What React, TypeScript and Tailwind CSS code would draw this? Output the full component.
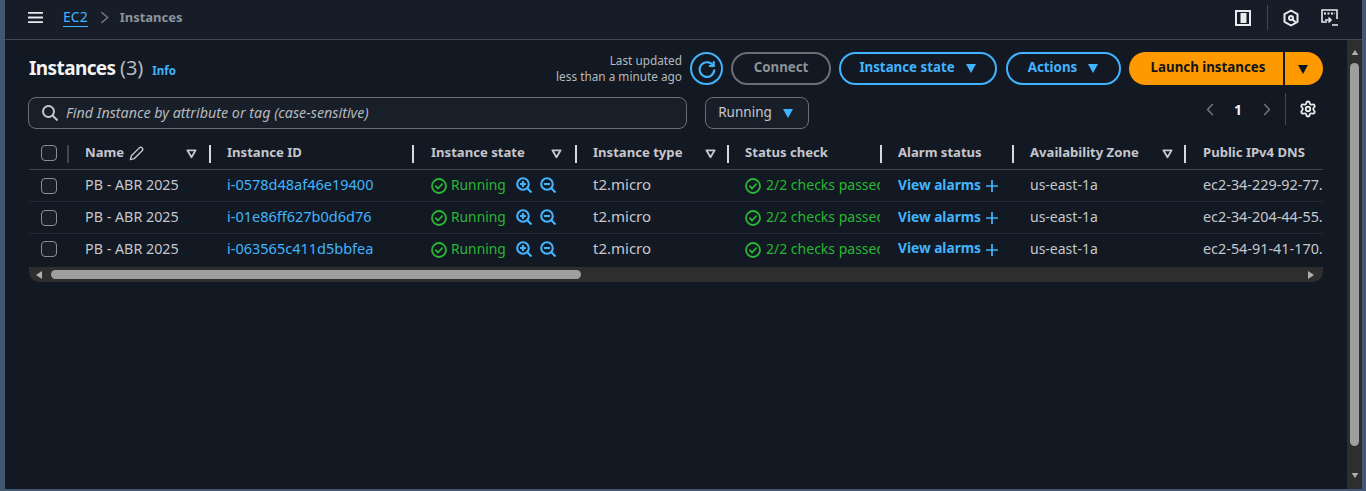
import React from "react";
import { Settings } from "lucide-react";

const font = { fontFamily: '"Noto Sans", sans-serif' };

function Caret({ className = "" }: { className?: string }) {
  return (
    <svg viewBox="0 0 12 12" className={`w-[12px] h-[12px] ${className}`}>
      <path d="M1 2h10L6 11z" fill="currentColor" />
    </svg>
  );
}

function SortIcon() {
  return (
    <svg viewBox="0 0 12 12" className="w-[11px] h-[11px] text-[#c6c6cd]">
      <path d="M1.500 2.500h9L6 10z" fill="none" stroke="currentColor" strokeWidth="2" strokeLinejoin="round" />
    </svg>
  );
}

function Sep({ grey = false }: { grey?: boolean }) {
  return <span className={`absolute right-0 top-[5px] h-[18px] w-[2px] ${grey ? "bg-[#414750]" : "bg-[#d5dbdb]"}`} />;
}

function Check({ className = "" }: { className?: string }) {
  return <span className={`block w-[16px] h-[16px] rounded-[4px] border border-[#8c8f94] bg-[#181f29] ${className}`} />;
}

function OkIcon() {
  return (
    <svg viewBox="0 0 16 16" className="mt-[2px] w-[16px] h-[16px] shrink-0 text-[#2bb534]" fill="none" stroke="currentColor" strokeWidth="1.800">
      <circle cx="8" cy="8" r="7" />
      <path d="M4.800 8.200l2.300 2.300 4-4.400" strokeLinecap="round" strokeLinejoin="round" />
    </svg>
  );
}

function Zoom({ plus }: { plus?: boolean }) {
  return (
    <svg viewBox="0 0 16 16" className="w-[16px] h-[16px] text-[#42b4ff]" fill="none" stroke="currentColor" strokeWidth="2.100">
      <circle cx="7" cy="7" r="5.800" />
      <path d="M11.500 11.500l4 4" />
      <path d={plus ? "M4 7h6M7 4v6" : "M4 7h6"} />
    </svg>
  );
}

const widths = ["w-[40px]", "w-[142px]", "w-[203px]", "w-[163px]", "w-[152px]", "w-[153px]", "w-[132px]", "w-[172px]", "w-[137px]"];
const pads = ["pl-[12px]", "pl-[16px]", "pl-[16px]", "pl-[17px]", "pl-[16px]", "pl-[16px]", "pl-[16px]", "pl-[16px]", "pl-[17px]"];
const sortGaps = ["", "mr-[2px]", "", "mr-[3px]", "mr-px", "", "", "mr-px", ""];

function Head({ i, label, sort, sep = true, children }: { i: number; label: string; sort?: boolean; sep?: boolean; children?: React.ReactNode }) {
  return (
    <div className={`${widths[i]} ${pads[i]} shrink-0 relative flex items-center pr-[12px] pb-[3px] text-[13.100px] font-bold text-[#c6c6cd]`}>
      <span className="whitespace-nowrap">{label}</span>
      {children}
      {sort && <span className={`ml-auto flex ${sortGaps[i]}`}><SortIcon /></span>}
      {sep && <Sep />}
    </div>
  );
}

const rows = [
  { id: "i-0578d48af46e19400", dns: "ec2-34-229-92-77.compute-1.amazonaws.com" },
  { id: "i-01e86ff627b0d6d76", dns: "ec2-34-204-44-55.compute-1.amazonaws.com" },
  { id: "i-063565c411d5bbfea", dns: "ec2-54-91-41-170.compute-1.amazonaws.com" },
];

function Cell({ i, children, className = "text-[14px]" }: { i: number; children: React.ReactNode; className?: string }) {
  return (
    <div className={`${widths[i]} ${pads[i]} shrink-0 overflow-hidden whitespace-nowrap flex items-center text-[#c6c6cd] ${className}`}>
      {children}
    </div>
  );
}

function Pill({ children, className = "" }: { children: React.ReactNode; className?: string }) {
  return (
    <div className={`h-[33px] rounded-full border-2 flex items-center justify-center pb-[2px] text-[13.300px] font-bold ${className}`}>
      {children}
    </div>
  );
}

export default function App() {
  return (
    <div style={font} className="w-[1366px] h-[491px] overflow-hidden bg-[#445772] pl-[5px] pr-[4px] pb-[2px] flex flex-col">
      <header className="h-[40px] shrink-0 bg-[#161d28] border-b border-[#414750] flex items-center pb-[4px] text-[14px]">
        <svg viewBox="0 0 16 14" className="ml-[23px] w-[15px] h-[13px] text-[#e9ebed]" fill="none" stroke="currentColor" strokeWidth="2">
          <path d="M0 2h16M0 7h16M0 12h16" />
        </svg>
        <a className="ml-[20px] text-[#42b4ff] border-b border-[#42b4ff] leading-[18px]">EC2</a>
        <svg viewBox="0 0 10 14" className="ml-[12px] w-[9px] h-[13px] text-[#6f7680]" fill="none" stroke="currentColor" strokeWidth="1.600">
          <path d="M1.500 1l7 6-7 6" />
        </svg>
        <span className="ml-[11px] font-bold text-[13px] text-[#8d949c]">Instances</span>
        <div className="ml-auto flex items-center mr-[23px]">
          <svg viewBox="0 0 16 16" className="w-[16px] h-[16px] text-[#e9ebed]" fill="none" stroke="currentColor" strokeWidth="2">
            <rect x="1" y="1" width="14" height="14" />
            <rect x="5.500" y="3" width="6" height="10" fill="currentColor" stroke="none" />
          </svg>
          <span className="ml-[16px] h-[25px] w-px bg-[#414750]" />
          <svg viewBox="0 0 16 18" className="ml-[15px] w-[16px] h-[18px] text-[#e9ebed]" fill="none" stroke="currentColor" strokeWidth="2">
            <path d="M8 1.500l6.500 3.700v7.600L8 16.500l-6.500-3.700V5.200z" strokeLinejoin="round" />
            <circle cx="8" cy="9" r="2" />
            <path d="M9.500 10.500l3 2.500" />
          </svg>
          <svg viewBox="0 0 18 18" className="ml-[22px] w-[18px] h-[18px] text-[#e9ebed]" fill="none" stroke="currentColor" strokeWidth="1.600">
            <path d="M6 13H1V1h15v9" />
            <path d="M3 4.500h11" strokeDasharray="2 1.500" strokeWidth="2" />
            <path d="M4 11h6M7.500 8.500L10 11l-2.500 2.500M11 16h6" />
          </svg>
        </div>
      </header>

      <div className="flex-1 flex min-h-0">
        <main className="flex-1 min-w-0 bg-[#121922] pl-[24px] pr-[24px] pt-[12px]">
          <div className="flex items-center h-[33px]">
            <h1 className="-mt-[2px] text-[19px] font-bold tracking-[-0.6px] text-[#f2f3f3] leading-none">Instances <span className="text-[20px] tracking-normal font-normal text-[#b4b9bf]">(3)</span></h1>
            <span className="ml-[9px] mt-[5px] text-[11.500px] font-bold text-[#42b4ff]">Info</span>
            <div className="ml-auto flex items-center">
              <div className="-mt-[2px] text-right text-[11.800px] leading-[16px] text-[#b4b9bf] mr-[8px]">
                <div>Last updated</div>
                <div>less than a minute ago</div>
              </div>
              <div className="w-[33px] h-[33px] rounded-full border-2 border-[#42b4ff] flex items-center justify-center text-[#42b4ff]">
                <svg viewBox="0 0 16 16" className="w-[18px] h-[18px]" fill="none" stroke="currentColor" strokeWidth="1.900">
                  <path d="M13.500 5A6.500 6.500 0 1 0 14.500 8.500" />
                  <path d="M14 1v4.300H9.700" />
                </svg>
              </div>
              <Pill className="ml-[8px] w-[100px] border-[#6b6f75] text-[#8d9198]">Connect</Pill>
              <Pill className="ml-[8px] w-[158px] border-[#42b4ff] text-[#42b4ff] gap-[10px]">Instance state <Caret className="mt-[1px]" /></Pill>
              <Pill className="ml-[9px] w-[115px] border-[#42b4ff] text-[#42b4ff] gap-[10px]">Actions <Caret className="mt-[1px]" /></Pill>
              <div className="ml-[8px] flex h-[33px] text-[13.300px] font-bold text-[#0f141a]">
                <div className="w-[154px] rounded-l-full bg-[#ff9900] flex items-center justify-center pb-[2px] pl-[4px]">Launch instances</div>
                <div className="w-[38px] ml-[2px] rounded-r-full bg-[#ff9900] flex items-center justify-center pr-[3px]"><Caret /></div>
              </div>
            </div>
          </div>

          <div className="flex items-center mt-[12px] h-[32px]">
            <div className="-ml-px w-[659px] h-[32px] rounded-[8px] border border-[#6b6f75] bg-[#181f29] flex items-center pl-[13px] pb-[1px]">
              <svg viewBox="0 0 16 16" className="w-[16px] h-[16px] text-[#c6c6cd]" fill="none" stroke="currentColor" strokeWidth="2">
                <circle cx="6.500" cy="6.500" r="5.500" />
                <path d="M10.500 10.500l5 5" />
              </svg>
              <span className="ml-[8px] text-[14.300px] italic text-[#b4b9bf]">Find Instance by attribute or tag (case-sensitive)</span>
            </div>
            <div className="ml-[18px] w-[104px] h-[32px] rounded-[8px] border border-[#6b6f75] bg-[#181f29] flex items-center justify-center gap-[10px] pb-[1px] pr-[2px] text-[13.500px] text-[#c6c6cd]">
              Running <Caret className="text-[#42b4ff]" />
            </div>
            <div className="ml-auto -mt-[8px] flex items-center h-[32px]">
              <svg viewBox="0 0 10 16" className="w-[8px] h-[13px] text-[#6f7680]" fill="none" stroke="currentColor" strokeWidth="1.900"><path d="M8.500 1L2 8l6.500 7" /></svg>
              <span className="ml-[20px] mr-[21px] text-[14px] font-bold text-[#f2f3f3]">1</span>
              <svg viewBox="0 0 10 16" className="w-[8px] h-[13px] text-[#6f7680]" fill="none" stroke="currentColor" strokeWidth="1.900"><path d="M1.500 1L8 8l-6.500 7" /></svg>
              <span className="ml-[14px] h-[32px] w-px bg-[#414750]" />
              <Settings className="ml-[13px] mr-[6px] w-[18px] h-[18px] text-[#e9ebed]" strokeWidth={2.400} />
            </div>
          </div>

          <div className="mt-[11px]">
            <div className="flex h-[30px] border-b border-[#414750]">
              <div className={`${widths[0]} shrink-0 relative flex items-center pl-[12px] pb-[3px]`}>
                <Check /><Sep grey />
              </div>
              <Head i={1} label="Name" sort>
                <svg viewBox="0 0 16 16" className="ml-[5px] w-[15px] h-[15px] text-[#c6c6cd]" fill="none" stroke="currentColor" strokeWidth="1.500">
                  <path d="M1.500 14.500l1-4L11 2a1.800 1.800 0 0 1 3 3l-8.500 8.500z" strokeLinejoin="round" />
                </svg>
              </Head>
              <Head i={2} label="Instance ID" />
              <Head i={3} label="Instance state" sort />
              <Head i={4} label="Instance type" sort />
              <Head i={5} label="Status check" />
              <Head i={6} label="Alarm status" />
              <Head i={7} label="Availability Zone" sort />
              <Head i={8} label="Public IPv4 DNS" sep={false} />
            </div>
            {rows.map((r, idx) => (
              <div key={r.id} className={`flex ${idx < 2 ? "h-[32px] pb-[2px] border-b border-[#232b37]" : "h-[33px] pb-[4px]"}`}>
                <div className={`${widths[0]} shrink-0 flex items-center pl-[12px]`}><Check className={idx < 2 ? "mt-[2px]" : ""} /></div>
                <Cell i={1} className="text-[14.300px]">PB - ABR 2025</Cell>
                <Cell i={2} className="text-[14.500px]"><span className="text-[#42b4ff]">{r.id}</span></Cell>
                <Cell i={3}>
                  <OkIcon />
                  <span className="ml-[4px] mt-[1px] text-[13.800px] text-[#2bb534]">Running</span>
                  <span className="ml-[10px] mt-[1px] flex gap-[8px]"><Zoom plus /><Zoom /></span>
                </Cell>
                <Cell i={4} className="text-[15px]">t2.micro</Cell>
                <Cell i={5} className="text-[14px] pr-[2px]">
                  <OkIcon />
                  <span className="ml-[5px] min-w-0 overflow-hidden text-[#2bb534]">2/2 checks passed</span>
                </Cell>
                <Cell i={6}>
                  <span className={`text-[13.700px] font-bold text-[#42b4ff] ${idx < 2 ? "mt-[1px]" : ""}`}>View alarms</span>
                  <svg viewBox="0 0 14 14" className="ml-[5px] mt-[2px] w-[12px] h-[12px] text-[#42b4ff]" fill="none" stroke="currentColor" strokeWidth="2"><path d="M7 0v14M0 7h14" /></svg>
                </Cell>
                <Cell i={7}>us-east-1a</Cell>
                <Cell i={8} className="text-[14.400px]">{r.dns}</Cell>
              </div>
            ))}
            <div className="h-[15px] bg-[#2e2e2e] rounded-b-[10px] flex items-center pl-[7px] pr-[9px]">
              <svg viewBox="0 0 6 8" className="w-[6px] h-[8px] text-[#b0b0b0]"><path d="M6 0v8L0 4z" fill="currentColor" /></svg>
              <span className="ml-[9px] w-[530px] h-[9px] rounded-full bg-[#9f9f9f]" />
              <svg viewBox="0 0 6 8" className="ml-auto w-[6px] h-[8px] text-[#b0b0b0]"><path d="M0 0v8l6-4z" fill="currentColor" /></svg>
            </div>
          </div>
        </main>
        <div className="w-[15px] shrink-0 bg-[#2e2e2e] flex flex-col items-center pt-[10px] pb-[11px]">
          <svg viewBox="0 0 8 6" className="w-[8px] h-[5px] text-[#b0b0b0]"><path d="M4 0l4 6H0z" fill="currentColor" /></svg>
          <span className="mt-[8px] w-[9px] h-[383px] rounded-full bg-[#9f9f9f]" />
          <svg viewBox="0 0 8 6" className="mt-auto w-[8px] h-[5px] text-[#b0b0b0]"><path d="M4 6l4-6H0z" fill="currentColor" /></svg>
        </div>
      </div>
    </div>
  );
}
